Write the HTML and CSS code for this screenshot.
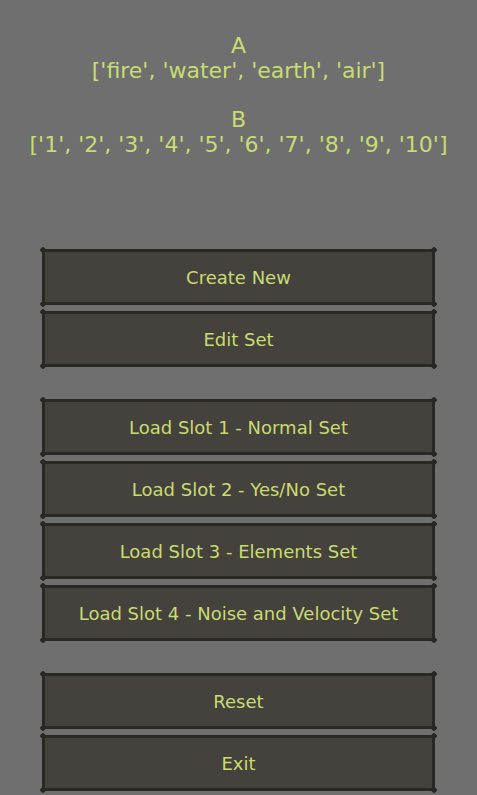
FILE: index.html
```html
<!DOCTYPE html>
<html>
  <head>
    <title>Sets</title>
    <link rel="stylesheet" href="styles.css">
  </head>
  <body>
    <div class="sets">
      <div class="set">
        <div>A</div>
        <div>['fire', 'water', 'earth', 'air']</div>
      </div>
      <div class="set">
        <div>B</div>
        <div>['1', '2', '3', '4', '5', '6', '7', '8', '9', '10']</div>
      </div>
    </div>

    <div class="menu">
      <div class="group">
        <button>Create New</button>
        <button>Edit Set</button>
      </div>
      <div class="group">
        <button>Load Slot 1 - Normal Set</button>
        <button>Load Slot 2 - Yes/No Set</button>
        <button>Load Slot 3 - Elements Set</button>
        <button>Load Slot 4 - Noise and Velocity Set</button>
      </div>
      <div class="group">
        <button>Reset</button>
        <button>Exit</button>
      </div>
    </div>
  </body>
</html>
```

FILE: styles.css
```css
body {
  margin: 0;
  background-color: #6f6f6f;
  color: #c8dc72;
  font-family: "DejaVu Sans", sans-serif;
  height: 795px;
  overflow: hidden;
}
.sets {
  padding-top: 33px;
  text-align: center;
  font-size: 22px;
  line-height: 25px;
  display: flex;
  flex-direction: column;
  gap: 24px;
}
.menu {
  width: 393px;
  margin: 92px auto 0;
  display: flex;
  flex-direction: column;
  gap: 32px;
}
.group {
  display: flex;
  flex-direction: column;
  gap: 6px;
}
button {
  position: relative;
  height: 56px;
  width: 100%;
  background-color: #45413c;
  border: 3px solid #2a2825;
  border-radius: 3px;
  color: #c8dc72;
  font-family: "DejaVu Sans", sans-serif;
  font-size: 18px;
  padding: 0;
  cursor: pointer;
}
/* little knobs on the corners */
button::before,
button::after {
  content: "";
  position: absolute;
  left: -5px;
  right: -5px;
  height: 6px;
  background:
    radial-gradient(circle, #2a2825 2.5px, transparent 3px) left center / 6px 6px no-repeat,
    radial-gradient(circle, #2a2825 2.5px, transparent 3px) right center / 6px 6px no-repeat;
}
button::before {
  top: -5px;
}
button::after {
  bottom: -5px;
}
button:hover {
  background-color: #4d4943;
}
```
